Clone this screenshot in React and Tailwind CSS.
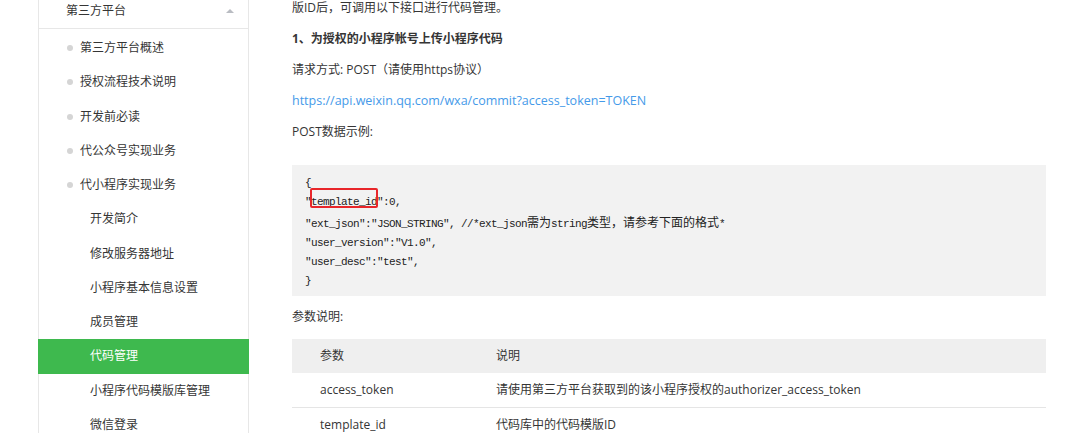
import React from "react";

const FONT = { fontFamily: '"Open Sans","Noto Sans CJK SC",sans-serif' };

const level1 = ["第三方平台概述", "授权流程技术说明", "开发前必读", "代公众号实现业务", "代小程序实现业务"];
const level2 = ["开发简介", "修改服务器地址", "小程序基本信息设置", "成员管理", "代码管理", "小程序代码模版库管理", "微信登录"];

function Sidebar() {
  return (
    <div className="ml-[38px] w-[211px] shrink-0 border-x border-[#e7e7e7] bg-white text-[12px] text-[#353535] self-stretch">
      <div className="flex h-[29px] items-center justify-between border-b border-[#e7e7e7] pl-[27px] pr-[14px]">
        <span className="leading-[22px] -mt-[7px]">第三方平台</span>
        <span className="-mt-[7px] h-0 w-0 border-x-[4px] border-b-[4px] border-x-transparent border-b-[#b9bcc2]" />
      </div>
      <div className="pt-[2px]">
        {level1.map((t) => (
          <div key={t} className="flex h-[34.25px] items-center pl-[28px]">
            <span className="mr-[7px] h-[6px] w-[6px] rounded-full bg-[#d5d5d5]" />
            <span>{t}</span>
          </div>
        ))}
        {level2.map((t) => (
          <div
            key={t}
            className={
              "flex h-[34.25px] items-center pl-[51px] " +
              (t === "代码管理" ? "bg-[#3eb94e] text-white -mx-px pl-[52px]" : "")
            }
          >
            <span>{t}</span>
          </div>
        ))}
      </div>
    </div>
  );
}

function Code() {
  return (
    <div className="relative mt-[25px] h-[131px] bg-[#f2f2f2] pl-[13px] py-[8.5px] text-[#222]">
      <div className="text-[11px] leading-[19px] tracking-[-0.6px]" style={{ fontFamily: '"Liberation Mono","Noto Sans CJK SC",monospace' }}>
        <div>{"{"}</div>
        <div>
          "<span className="underline">template_id</span>":0,
        </div>
        <div>
          {'"ext_json":"JSON_STRING", //*ext_json'}
          <span className="text-[12px] tracking-normal" style={{ fontFamily: '"Noto Sans CJK SC",sans-serif' }}>需为</span>
          string
          <span className="text-[12px] tracking-normal" style={{ fontFamily: '"Noto Sans CJK SC",sans-serif' }}>类型，请参考下面的格式</span>*
        </div>
        <div>{'"user_version":"V1.0",'}</div>
        <div>{'"user_desc":"test",'}</div>
        <div>{"}"}</div>
      </div>
      <div className="absolute left-[18px] top-[23px] h-[20px] w-[68px] rounded-[2px] border-2 border-[#e8262a]" />
    </div>
  );
}

function Table() {
  return (
    <div className="mt-[14px] text-[12px] text-[#353535]">
      <div className="flex h-[34px] items-center bg-[#efefef]">
        <div className="w-[176px] pl-[28px]">参数</div>
        <div className="pl-[28px]">说明</div>
      </div>
      <div className="flex h-[35px] items-center border-b border-[#e5e5e5]">
        <div className="w-[176px] pl-[28px]">access_token</div>
        <div className="pl-[28px]">请使用第三方平台获取到的该小程序授权的authorizer_access_token</div>
      </div>
      <div className="flex h-[35px] items-center border-b border-[#e5e5e5]">
        <div className="w-[176px] pl-[28px]">template_id</div>
        <div className="pl-[28px]">代码库中的代码模版ID</div>
      </div>
    </div>
  );
}

export default function App() {
  return (
    <div className="flex h-[433px] w-[1080px] overflow-hidden bg-white" style={FONT}>
      <Sidebar />
      <div className="ml-[43px] w-[754px] shrink-0 text-[12px] text-[#353535]">
        <p className="leading-[16px]">版ID后，可调用以下接口进行代码管理。</p>
        <p className="mt-[15px] leading-[16px] font-bold">1、为授权的小程序帐号上传小程序代码</p>
        <p className="mt-[15px] leading-[16px]">请求方式: POST（请使用https协议）</p>
        <p className="mt-[15px] leading-[16px] text-[12.5px] text-[#459ae9]">https://api.weixin.qq.com/wxa/commit?access_token=TOKEN</p>
        <p className="mt-[15px] leading-[16px]">POST数据示例:</p>
        <Code />
        <p className="mt-[13px] leading-[16px]">参数说明:</p>
        <Table />
      </div>
    </div>
  );
}
